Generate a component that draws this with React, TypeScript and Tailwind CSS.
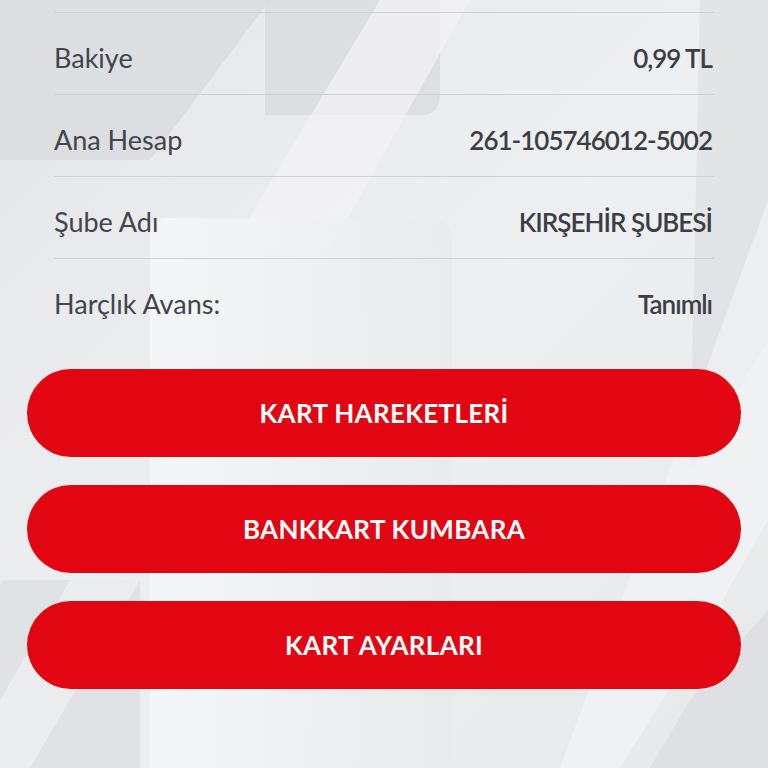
import React from "react";

const rows = [
  { label: "Bakiye", value: "0,99 TL" },
  { label: "Ana Hesap", value: "261-105746012-5002" },
  { label: "Şube Adı", value: "KIRŞEHİR ŞUBESİ" },
  { label: "Harçlık Avans:", value: "Tanımlı" },
];

const buttons = ["KART HAREKETLERİ", "BANKKART KUMBARA", "KART AYARLARI"];

const Backdrop = () => (
  <svg
    className="absolute inset-0 w-full h-full"
    viewBox="0 0 768 768"
    preserveAspectRatio="none"
  >
    <defs>
      <linearGradient id="bg" x1="0" y1="0" x2="1" y2="1">
        <stop offset="0" stopColor="#e4e6e9" />
        <stop offset="0.5" stopColor="#eeeff1" />
        <stop offset="1" stopColor="#e6e8ea" />
      </linearGradient>
      <linearGradient id="lite" x1="0" y1="0" x2="1" y2="0">
        <stop offset="0" stopColor="#f6f7f8" />
        <stop offset="1" stopColor="#e9eaec" />
      </linearGradient>
    </defs>
    <rect width="768" height="768" fill="url(#bg)" />
    <path d="M0 0 H270 L150 160 H0 Z" fill="#dcdee1" />
    <path d="M265 0 H440 V95 Q440 115 420 115 H265 Z" fill="#d9dbde" opacity="0.8" />
    <path d="M380 0 H470 L330 250 H230 Z" fill="#f3f4f5" opacity="0.7" />
    <path d="M150 235 Q150 218 168 218 H430 Q452 218 452 240 V768 H150 Z" fill="url(#lite)" opacity="0.85" />
    <path d="M700 0 H768 V340 L690 470 Z" fill="#dfe1e4" opacity="0.8" />
    <path d="M768 200 V520 L700 640 L620 768 H560 Z" fill="#f4f5f6" opacity="0.6" />
    <path d="M0 585 Q0 580 10 580 H140 V768 H0 Z" fill="#dcdee1" opacity="0.8" />
    <path d="M0 700 L70 580 H140 L30 768 H0 Z" fill="#f2f3f4" opacity="0.6" />
    <path d="M690 700 L768 610 V768 H650 Z" fill="#dadcdf" opacity="0.7" />
  </svg>
);

export default function App() {
  return (
    <div
      className="relative w-[768px] h-[768px] overflow-hidden"
      style={{ fontFamily: "Lato, 'Noto Sans', sans-serif" }}
    >
      <Backdrop />
      <div className="relative flex flex-col pt-3">
        <div className="flex flex-col px-[54px]">
          <div className="h-px bg-[#cfd1d4]" />
          {rows.map((r, i) => (
            <div key={r.label} className="flex flex-col">
              <div className="flex items-center justify-between h-[81px] pt-[9px] text-[#3b3e45]">
                <span className="text-[27px] font-normal text-[#42454c]">{r.label}</span>
                <span className="mr-[2px] text-[26px] font-semibold tracking-[-1px]">{r.value}</span>
              </div>
              {i < rows.length - 1 && <div className="h-px bg-[#cfd1d4]" />}
            </div>
          ))}
        </div>
        <div className="flex flex-col gap-[28px] px-[27px] mt-[29px]">
          {buttons.map((b) => (
            <button
              key={b}
              className="h-[88px] w-full rounded-full bg-[#e20613] text-white text-[26px] font-bold tracking-[0.3px]"
            >
              {b}
            </button>
          ))}
        </div>
      </div>
    </div>
  );
}
